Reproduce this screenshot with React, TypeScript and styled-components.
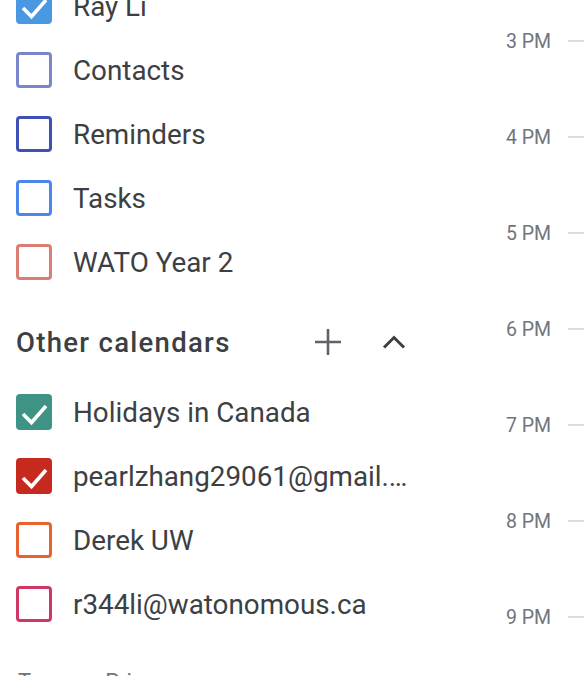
import styled, { createGlobalStyle } from "styled-components";

const GlobalStyle = createGlobalStyle`
  html, body {
    margin: 0;
    padding: 0;
    background: #ffffff;
    height: 676px;
    overflow: hidden;
    font-family: Roboto, "Liberation Sans", Arial, sans-serif;
  }
`;

const Page = styled.div`
  display: flex;
  justify-content: space-between;
  width: 584px;
  height: 676px;
  overflow: hidden;
`;

const Sidebar = styled.div`
  width: 434px;
  display: flex;
  flex-direction: column;
  margin-top: -26px;
`;

const ItemRow = styled.div`
  height: 64px;
  display: flex;
  align-items: center;
  gap: 21px;
  padding-left: 16px;
  flex-shrink: 0;
`;

const Box = styled.div<{ $color: string; $checked?: boolean }>`
  width: 36px;
  height: 36px;
  box-sizing: border-box;
  border-radius: 4px;
  border: 3px solid ${(p) => p.$color};
  background: ${(p) => (p.$checked ? p.$color : "transparent")};
  display: flex;
  align-items: center;
  justify-content: center;
  flex-shrink: 0;
`;

const Label = styled.span`
  font-size: 27.8px;
  color: #3c4043;
  white-space: nowrap;
  overflow: hidden;
  text-overflow: ellipsis;
  max-width: 338px;
`;

const Header = styled.div`
  height: 48px;
  margin: 24px 0 14px;
  display: flex;
  align-items: center;
  padding-left: 16px;
  padding-right: 16px;
`;

const HeaderTitle = styled.div`
  flex: 1;
  font-size: 27.5px;
  font-weight: 500;
  letter-spacing: 1.3px;
  color: #3c4043;
`;

const IconButton = styled.div`
  width: 48px;
  height: 48px;
  display: flex;
  align-items: center;
  justify-content: center;
  margin-left: 18px;
`;

const Footer = styled.div`
  margin-top: 32px;
  padding-left: 18px;
  font-size: 22px;
  line-height: 28px;
  color: #70757a;
  white-space: nowrap;
`;

const TimeColumn = styled.div`
  width: 104px;
  display: flex;
  flex-direction: column;
  gap: 74px;
  padding-top: 30px;
`;

const TimeRow = styled.div`
  height: 22px;
  display: flex;
  align-items: center;
  justify-content: flex-end;
  flex-shrink: 0;
`;

const TimeLabel = styled.span`
  font-size: 19.5px;
  color: #70757a;
  margin-right: 17px;
`;

const Tick = styled.div`
  width: 16px;
  height: 2px;
  background: #dadce0;
`;

const Check = () => (
  <svg width="36" height="36" viewBox="0 0 36 36" style={{ margin: -3 }}>
    <polyline
      points="7,20 15.5,28.5 30,12"
      fill="none"
      stroke="#ffffff"
      strokeWidth="3.6"
    />
  </svg>
);

interface Cal {
  name: string;
  color: string;
  checked?: boolean;
}

const myCalendars: Cal[] = [
  { name: "Ray Li", color: "#4a97e2", checked: true },
  { name: "Contacts", color: "#7986cb" },
  { name: "Reminders", color: "#3f51b5" },
  { name: "Tasks", color: "#4a86ec" },
  { name: "WATO Year 2", color: "#dc7d73" },
];

const otherCalendars: Cal[] = [
  { name: "Holidays in Canada", color: "#3f9384", checked: true },
  { name: "pearlzhang29061@gmail.com", color: "#c62a1f", checked: true },
  { name: "Derek UW", color: "#e8622f" },
  { name: "r344li@watonomous.ca", color: "#cf3764" },
];

const hours = ["3 PM", "4 PM", "5 PM", "6 PM", "7 PM", "8 PM", "9 PM"];

const CalendarItem = ({ cal }: { cal: Cal }) => (
  <ItemRow>
    <Box $color={cal.color} $checked={cal.checked}>
      {cal.checked ? <Check /> : null}
    </Box>
    <Label>{cal.name}</Label>
  </ItemRow>
);

const App = () => {
  return (
    <>
      <GlobalStyle />
      <Page>
        <Sidebar>
          {myCalendars.map((c) => (
            <CalendarItem key={c.name} cal={c} />
          ))}
          <Header>
            <HeaderTitle>Other calendars</HeaderTitle>
            <IconButton>
              <svg width="28" height="28" viewBox="0 0 28 28">
                <path d="M14 1v26M1 14h26" stroke="#5f6368" strokeWidth="2.6" fill="none" />
              </svg>
            </IconButton>
            <IconButton>
              <svg width="24" height="14" viewBox="0 0 24 14">
                <polyline points="2,12.5 12,2.5 22,12.5" fill="none" stroke="#3c4043" strokeWidth="3" />
              </svg>
            </IconButton>
          </Header>
          {otherCalendars.map((c) => (
            <CalendarItem key={c.name} cal={c} />
          ))}
          <Footer>Terms – Privacy</Footer>
        </Sidebar>
        <TimeColumn>
          {hours.map((h) => (
            <TimeRow key={h}>
              <TimeLabel>{h}</TimeLabel>
              <Tick />
            </TimeRow>
          ))}
        </TimeColumn>
      </Page>
    </>
  );
};

export default App;
